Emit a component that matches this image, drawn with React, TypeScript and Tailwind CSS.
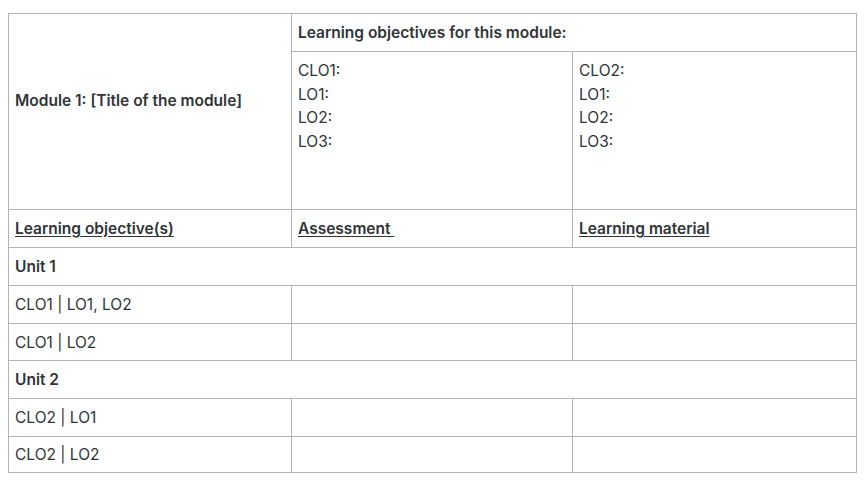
import React from "react";

const b = "border border-[#b4b4b4]";
const cell = `${b} px-[6px] py-0 align-middle`;

export default function App() {
  return (
    <div
      className="min-h-[480px] bg-white pl-2 pt-[13px] text-[15.5px] leading-[23px] text-[#2f3439]"
      style={{ fontFamily: "Inter, 'Noto Sans', sans-serif" }}
    >
      <table className="w-[848px] table-fixed border-collapse">
        <colgroup>
          <col className="w-[283px]" />
          <col className="w-[281px]" />
          <col className="w-[284px]" />
        </colgroup>
        <tbody>
          <tr className="h-[38px]">
            <td rowSpan={2} className={`${b} px-[6px] pb-[22px] align-middle font-semibold`}>
              Module 1: [Title of the module]
            </td>
            <td colSpan={2} className={`${cell} font-semibold`}>
              Learning objectives for this module:
            </td>
          </tr>
          <tr className="h-[158px]">
            <td className={`${b} px-[6px] pt-[7px] align-top`}>
              <div className="leading-[23.5px]">
                <div>CLO1:</div>
                <div>LO1:</div>
                <div>LO2:</div>
                <div>LO3:</div>
              </div>
            </td>
            <td className={`${b} px-[6px] pt-[7px] align-top`}>
              <div className="leading-[23.5px]">
                <div>CLO2:</div>
                <div>LO1:</div>
                <div>LO2:</div>
                <div>LO3:</div>
              </div>
            </td>
          </tr>
          <tr className="h-[38px]">
            <td className={`${cell} font-semibold`}>
              <span className="underline underline-offset-2">Learning objective(s)</span>
            </td>
            <td className={`${cell} font-semibold`}>
              <span className="underline underline-offset-2 whitespace-pre">Assessment </span>
            </td>
            <td className={`${cell} font-semibold`}>
              <span className="underline underline-offset-2">Learning material</span>
            </td>
          </tr>
          <tr className="h-[38px]">
            <td colSpan={3} className={`${cell} font-semibold`}>
              Unit 1
            </td>
          </tr>
          <tr className="h-[38px]">
            <td className={cell}>CLO1 | LO1, LO2</td>
            <td className={cell}></td>
            <td className={cell}></td>
          </tr>
          <tr className="h-[37px]">
            <td className={cell}>CLO1 | LO2</td>
            <td className={cell}></td>
            <td className={cell}></td>
          </tr>
          <tr className="h-[38px]">
            <td colSpan={3} className={`${cell} font-semibold`}>
              Unit 2
            </td>
          </tr>
          <tr className="h-[38px]">
            <td className={cell}>CLO2 | LO1</td>
            <td className={cell}></td>
            <td className={cell}></td>
          </tr>
          <tr className="h-[36px]">
            <td className={cell}>CLO2 | LO2</td>
            <td className={cell}></td>
            <td className={cell}></td>
          </tr>
        </tbody>
      </table>
    </div>
  );
}
